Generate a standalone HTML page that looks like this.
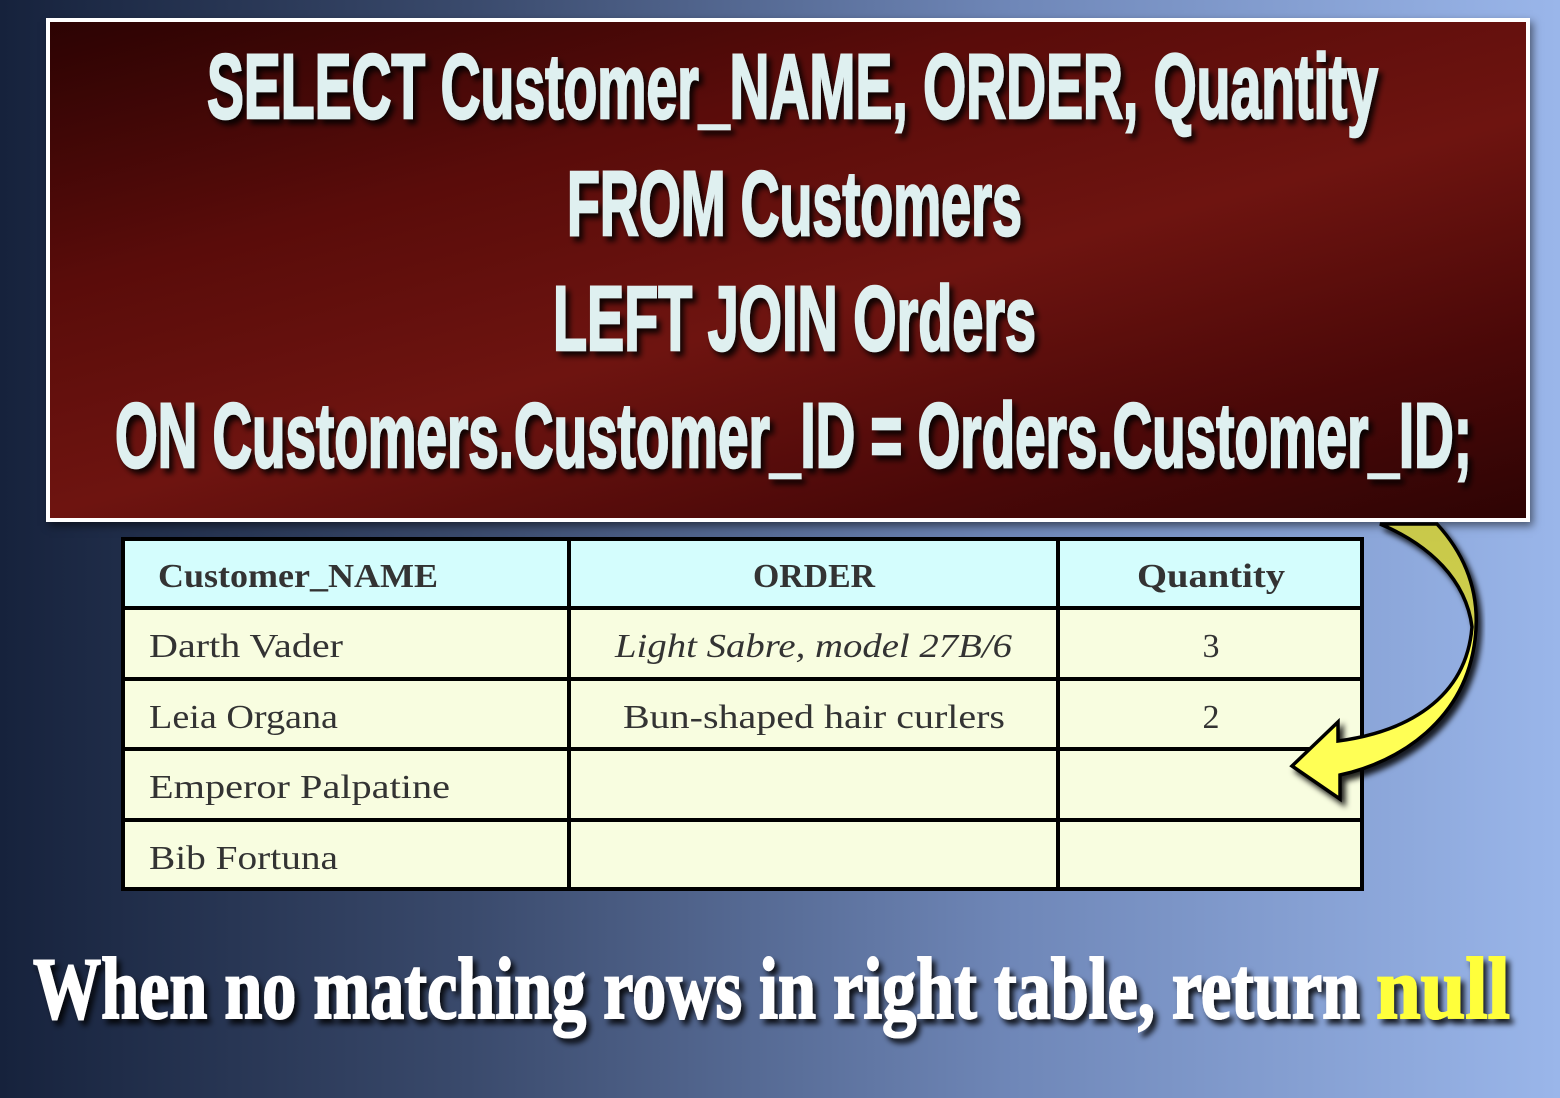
<!DOCTYPE html>
<html><head><meta charset="utf-8"><style>
html,body{margin:0;padding:0;width:1560px;height:1098px;overflow:hidden}
body{background:linear-gradient(90deg,#16223c 0%,#3a4a6c 30%,#6f87b8 65%,#9ab6ea 100%)}
#box{position:absolute;left:46px;top:18px;width:1476px;height:496px;border:4px solid #fff;
background:linear-gradient(165deg,#2c0303 0%,#5a0c0a 30%,#6e1410 55%,#4a0808 80%,#2e0404 100%);
box-shadow:3px 4px 8px rgba(0,0,0,.5)}
svg{position:absolute;left:0;top:0}
.t{font-family:"Liberation Sans Narrow","Liberation Sans",sans-serif;font-weight:bold;font-size:92px;fill:#dff0f0;stroke:#dff0f0;stroke-width:2.5px}
.c{font-family:"Liberation Serif","DejaVu Serif",serif;font-size:34px;fill:#333}
.b{font-family:"Liberation Serif",serif;font-weight:bold;font-size:88px;fill:#fff;stroke:#fff;stroke-width:2px}
</style></head><body>
<div id="box"></div>
<svg width="1560" height="1098" viewBox="0 0 1560 1098">
<defs>
<filter id="sh" x="-5%" y="-20%" width="110%" height="140%"><feDropShadow dx="4" dy="5" stdDeviation="3" flood-color="#000" flood-opacity=".85"/></filter>
<linearGradient id="ag" gradientUnits="userSpaceOnUse" x1="0" y1="520" x2="0" y2="800">
<stop offset="0" stop-color="#c8c84a"/><stop offset="0.38" stop-color="#cfcf4c"/><stop offset="0.4" stop-color="#ffff55"/><stop offset="1" stop-color="#ffff55"/></linearGradient>
</defs>
<g filter="url(#sh)">
<text class="t" x="207" y="118" textLength="1171" lengthAdjust="spacingAndGlyphs">SELECT Customer_NAME, ORDER, Quantity</text>
<text class="t" x="567" y="235" textLength="455" lengthAdjust="spacingAndGlyphs">FROM Customers</text>
<text class="t" x="553" y="350" textLength="483" lengthAdjust="spacingAndGlyphs">LEFT JOIN Orders</text>
<text class="t" x="115" y="467" textLength="1357" lengthAdjust="spacingAndGlyphs">ON Customers.Customer_ID = Orders.Customer_ID;</text>
</g>
<rect x="121" y="537" width="1243" height="71" fill="#d4fdfd"/>
<rect x="121" y="608" width="1243" height="283" fill="#f8fde0"/>
<g stroke="#000" stroke-width="4" fill="none">
<rect x="123" y="539" width="1239" height="350"/>
<line x1="569" y1="537" x2="569" y2="891"/><line x1="1058" y1="537" x2="1058" y2="891"/>
<line x1="121" y1="608" x2="1364" y2="608"/><line x1="121" y1="679" x2="1364" y2="679"/>
<line x1="121" y1="749" x2="1364" y2="749"/><line x1="121" y1="820" x2="1364" y2="820"/>
</g>
<g class="c">
<text class="c" x="158" y="587" font-weight="bold" textLength="280" lengthAdjust="spacingAndGlyphs">Customer_NAME</text>
<text class="c" x="753" y="587" font-weight="bold" textLength="122" lengthAdjust="spacingAndGlyphs">ORDER</text>
<text class="c" x="1137" y="587" font-weight="bold" textLength="148" lengthAdjust="spacingAndGlyphs">Quantity</text>
<text class="c" x="149" y="657" textLength="194" lengthAdjust="spacingAndGlyphs">Darth Vader</text>
<text class="c" x="615" y="657" font-style="italic" textLength="397" lengthAdjust="spacingAndGlyphs">Light Sabre, model 27B/6</text>
<text class="c" x="1211" y="657" text-anchor="middle">3</text>
<text class="c" x="149" y="728" textLength="189" lengthAdjust="spacingAndGlyphs">Leia Organa</text>
<text class="c" x="623" y="728" textLength="382" lengthAdjust="spacingAndGlyphs">Bun-shaped hair curlers</text>
<text class="c" x="1211" y="728" text-anchor="middle">2</text>
<text class="c" x="149" y="798" textLength="301" lengthAdjust="spacingAndGlyphs">Emperor Palpatine</text>
<text class="c" x="149" y="869" textLength="189" lengthAdjust="spacingAndGlyphs">Bib Fortuna</text>
</g>
<path d="M1437,524 C1470,560 1480,600 1475,640 C1465,720 1400,762 1340,775 L1340,799 L1292,766 L1338,722 L1338,741 C1405,732 1466,700 1472,627 C1466,580 1430,545 1380,524 Z" fill="url(#ag)" stroke="#000" stroke-width="3.5" stroke-linejoin="miter" filter="url(#sh)"/>
<g filter="url(#sh)">
<text class="b" x="33" y="1018" textLength="1327" lengthAdjust="spacingAndGlyphs">When no matching rows in right table, return</text>
<text class="b" x="1376" y="1018" textLength="134" lengthAdjust="spacingAndGlyphs" style="fill:#ffff3a;stroke:#ffff3a">null</text>
</g>
</svg>
</body></html>
